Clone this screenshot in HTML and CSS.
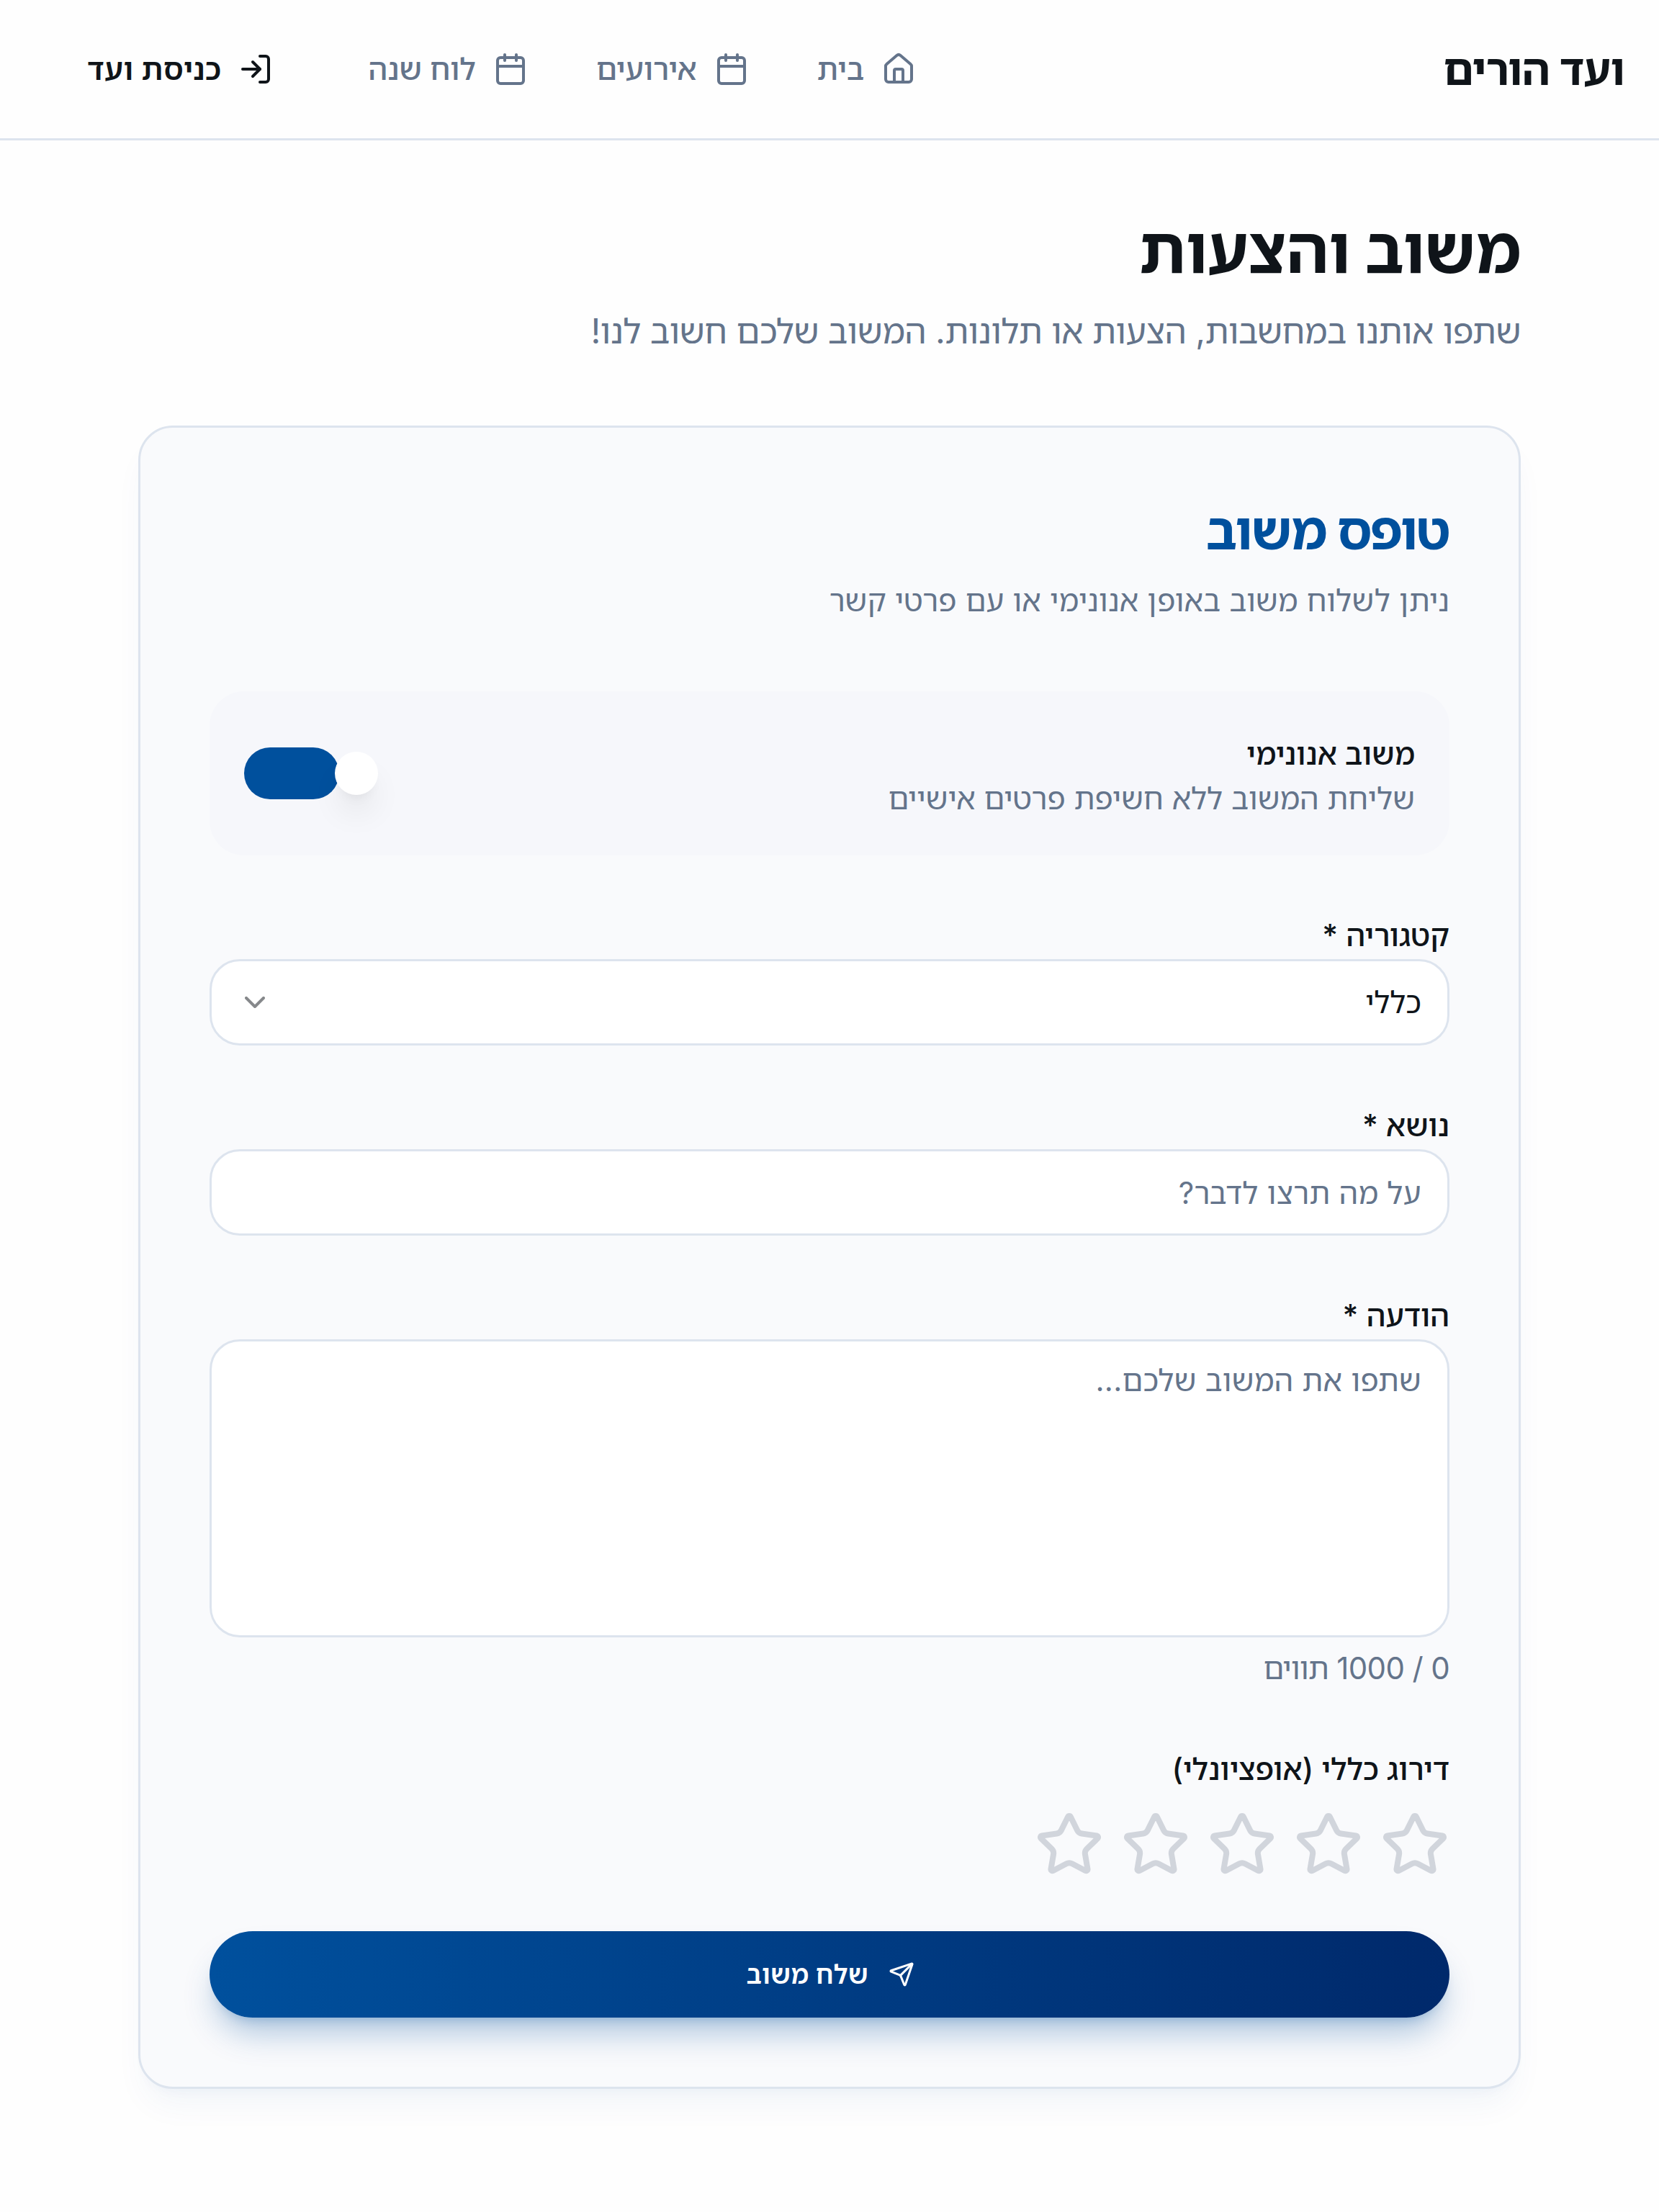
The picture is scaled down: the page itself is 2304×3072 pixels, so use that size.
FILE: index.html
```html
<!DOCTYPE html>
<html lang="he" dir="rtl">
<head>
<meta charset="utf-8">
<title>משוב והצעות</title>
<link rel="stylesheet" href="styles.css">
</head>
<body>
<header class="header">
  <a class="logo">ועד הורים</a>
  <nav class="nav">
    <a class="nav-link"><svg class="icon" viewBox="0 0 24 24"><path d="M15 21v-8a1 1 0 0 0-1-1h-4a1 1 0 0 0-1 1v8"/><path d="M3 10a2 2 0 0 1 .709-1.528l7-5.999a2 2 0 0 1 2.582 0l7 5.999A2 2 0 0 1 21 10v9a2 2 0 0 1-2 2H5a2 2 0 0 1-2-2z"/></svg><span>בית</span></a>
    <a class="nav-link"><svg class="icon" viewBox="0 0 24 24"><path d="M8 2v4"/><path d="M16 2v4"/><rect width="18" height="18" x="3" y="4" rx="2"/><path d="M3 10h18"/></svg><span>אירועים</span></a>
    <a class="nav-link"><svg class="icon" viewBox="0 0 24 24"><path d="M8 2v4"/><path d="M16 2v4"/><rect width="18" height="18" x="3" y="4" rx="2"/><path d="M3 10h18"/></svg><span>לוח שנה</span></a>
    <a class="nav-link nav-login"><svg class="icon" viewBox="0 0 24 24"><path d="m10 17 5-5-5-5"/><path d="M15 12H3"/><path d="M15 3h4a2 2 0 0 1 2 2v14a2 2 0 0 1-2 2h-4"/></svg><span>כניסת ועד</span></a>
  </nav>
</header>
<main class="page">
  <h1 class="title">משוב והצעות</h1>
  <p class="subtitle">שתפו אותנו במחשבות, הצעות או תלונות. המשוב שלכם חשוב לנו!</p>
  <section class="card">
    <h2 class="card-title">טופס משוב</h2>
    <p class="card-desc">ניתן לשלוח משוב באופן אנונימי או עם פרטי קשר</p>
    <form class="form">
      <div class="anon">
        <div class="anon-text">
          <span class="label">משוב אנונימי</span>
          <span class="hint">שליחת המשוב ללא חשיפת פרטים אישיים</span>
        </div>
        <div class="switch"><span class="thumb"></span></div>
      </div>
      <div class="field">
        <span class="label">קטגוריה *</span>
        <div class="control select"><span>כללי</span><svg class="icon chevron" viewBox="0 0 24 24"><path d="m6 9 6 6 6-6"/></svg></div>
      </div>
      <div class="field">
        <span class="label">נושא *</span>
        <div class="control placeholder">על מה תרצו לדבר?</div>
      </div>
      <div class="field field-message">
        <span class="label">הודעה *</span>
        <div class="control area placeholder">שתפו את המשוב שלכם...</div>
        <span class="counter">0 / 1000 תווים</span>
      </div>
      <div class="rating">
        <span class="label">דירוג כללי (אופציונלי)</span>
        <div class="stars">
          <svg class="star" viewBox="0 0 24 24"><use href="#star"/></svg>
          <svg class="star" viewBox="0 0 24 24"><use href="#star"/></svg>
          <svg class="star" viewBox="0 0 24 24"><use href="#star"/></svg>
          <svg class="star" viewBox="0 0 24 24"><use href="#star"/></svg>
          <svg class="star" viewBox="0 0 24 24"><use href="#star"/></svg>
        </div>
      </div>
      <button class="submit" type="button"><svg class="icon send" viewBox="0 0 24 24"><path d="M14.536 21.686a.5.5 0 0 0 .937-.024l6.5-19a.496.496 0 0 0-.635-.635l-19 6.5a.5.5 0 0 0-.024.937l7.93 3.18a2 2 0 0 1 1.112 1.11z"/><path d="m21.854 2.147-10.94 10.939"/></svg><span>שלח משוב</span></button>
    </form>
  </section>
</main>
<svg class="defs"><defs><path id="star" d="M11.525 2.295a.53.53 0 0 1 .95 0l2.31 4.679a2.123 2.123 0 0 0 1.595 1.16l5.166.756a.53.53 0 0 1 .294.904l-3.736 3.638a2.123 2.123 0 0 0-.611 1.878l.882 5.14a.53.53 0 0 1-.771.56l-4.618-2.428a2.122 2.122 0 0 0-1.973 0L6.396 21.01a.53.53 0 0 1-.77-.56l.881-5.139a2.122 2.122 0 0 0-.611-1.879L2.16 9.795a.53.53 0 0 1 .294-.906l5.165-.755a2.122 2.122 0 0 0 1.597-1.16z"/></defs></svg>
</body>
</html>
```
FILE: styles.css
```css
* { box-sizing: border-box; margin: 0; padding: 0; }
body {
  min-height: 3072px;
  background: #fefefe;
  color: #0f1419;
  font-family: Inter, "Noto Sans Hebrew", "Open Sans", sans-serif;
  font-size: 42px;
  line-height: 60px;
}
.defs { display: none; }
.icon {
  width: 48px; height: 48px; flex: none;
  fill: none; stroke: currentColor; stroke-width: 2;
  stroke-linecap: round; stroke-linejoin: round;
}
.header {
  display: flex; align-items: center; justify-content: space-between;
  height: 195px; padding: 0 48px 0 121px;
  border-bottom: 3px solid #dde4ee;
}
.logo { font-size: 60px; font-weight: 700; line-height: 84px; letter-spacing: -.7px; }
.nav { display: flex; align-items: center; gap: 95px; }
.nav-link { display: flex; align-items: center; gap: 24px; color: #64748b; font-weight: 500; white-space: nowrap; }
.nav-login { margin-right: 37px; color: #0f1419; font-weight: 600; letter-spacing: .45px; }
.page { padding: 98px 192px 0; }
.title { font-size: 90px; font-weight: 700; line-height: 108px; letter-spacing: -.3px; }
.subtitle { margin-top: 23px; color: #64748b; font-size: 48px; line-height: 72px; letter-spacing: -.48px; }
.card {
  margin-top: 95px; height: 2310px; padding: 95px 96px 0;
  border: 3px solid #dde4ee; border-radius: 48px; background: #f9fafc;
  box-shadow: 0 30px 45px -9px rgba(0, 80, 157, .05), 0 12px 18px -12px rgba(0, 80, 157, .05);
}
.card-title { color: #00509d; font-size: 72px; font-weight: 700; line-height: 96px; letter-spacing: -1.8px; }
.card-desc { margin-top: 19px; color: #64748b; line-height: 60px; letter-spacing: .13px; }
.form { display: flex; flex-direction: column; margin-top: 96px; }
.label { display: block; font-weight: 500; line-height: 60px; }
.hint { display: block; color: #64748b; line-height: 64px; letter-spacing: .06px; }
.anon {
  display: flex; align-items: center; justify-content: space-between;
  height: 228px; padding: 0 48px; border-radius: 48px; background: #f6f7fb;
}
.anon-text { padding-top: 9px; }
.switch { display: flex; align-items: center; width: 132px; height: 72px; border-radius: 36px; background: #00509d; }
.thumb {
  flex: none; width: 60px; height: 60px; border-radius: 50%; background: #fff;
  transform: translateX(54px);
  box-shadow: 0 30px 45px -9px rgba(0, 0, 0, .1), 0 12px 18px -12px rgba(0, 0, 0, .1);
}
.field { margin-top: 81px; }
.field .label { margin-bottom: 3px; }
.control {
  display: flex; align-items: center; justify-content: space-between;
  height: 120px; padding: 0 36px; border: 3px solid #dde4ee; border-radius: 42px; background: #fff;
}
.placeholder, .counter { color: #64748b; }
.placeholder { padding-top: 2px; letter-spacing: .3px; }
.chevron { opacity: .5; }
.area { height: 414px; padding-top: 24px; align-items: flex-start; }
.counter { display: block; margin-top: 13px; letter-spacing: -.65px; }
.rating { margin-top: 80px; }
.stars { display: flex; gap: 24px; margin-top: 27px; }
.star { width: 96px; height: 96px; fill: none; stroke: #d1d5dc; stroke-width: 2; stroke-linecap: round; stroke-linejoin: round; }
.submit {
  display: flex; align-items: center; justify-content: center; gap: 28px;
  height: 120px; margin-top: 72px; padding-left: 3px; border: 0; border-radius: 60px;
  color: #fff; font: inherit; font-size: 36px; font-weight: 600; line-height: 48px; letter-spacing: .45px;
  background: linear-gradient(to right, #00509d, #00296b);
  box-shadow: 0 30px 45px -9px rgba(0, 80, 157, .3), 0 12px 18px -12px rgba(0, 80, 157, .3);
}
.send { width: 36px; height: 36px; }
```
